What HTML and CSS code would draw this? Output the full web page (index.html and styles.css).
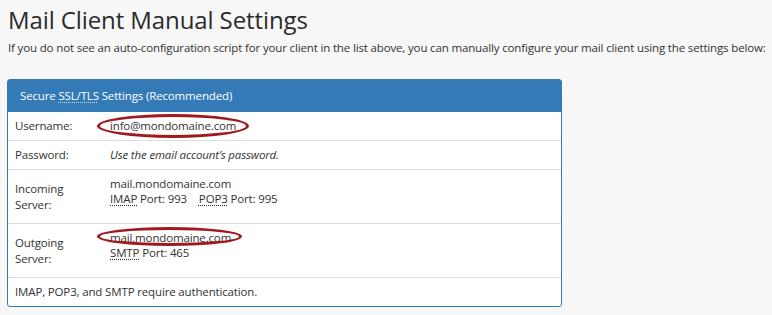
FILE: index.html
```html
<!DOCTYPE html>
<html lang="fr">
<head>
  <meta charset="UTF-8">
  <meta name="viewport" content="width=device-width, initial-scale=1.0">
  <title>Mail Client Manual Settings</title>
  <link rel="stylesheet" href="styles.css">
</head>
<body>
  <div class="page">
    <h1>Mail Client Manual Settings</h1>
    <p class="description">If you do not see an auto-configuration script for your client in the list above, you can manually configure your mail client using the settings below:</p>

    <div class="panel">
      <div class="panel-heading">Secure <abbr title="Secure Sockets Layer/Transport Layer Security">SSL/TLS</abbr> Settings (Recommended)</div>

      <div class="row">
        <div class="label">Username:</div>
        <div class="value"><span class="circled circled-user">info@mondomaine.com</span></div>
      </div>

      <div class="row">
        <div class="label">Password:</div>
        <div class="value"><em>Use the email account’s password.</em></div>
      </div>

      <div class="row row-server">
        <div class="label">Incoming<br>Server:</div>
        <div class="value">
          mail.mondomaine.com<br>
          <abbr title="Internet Message Access Protocol">IMAP</abbr> Port: 993
          <span class="port"><abbr title="Post Office Protocol 3">POP3</abbr> Port: 995</span>
        </div>
      </div>

      <div class="row row-server">
        <div class="label">Outgoing<br>Server:</div>
        <div class="value">
          <span class="circled circled-out">mail.mondomaine.com</span><br>
          <abbr title="Simple Mail Transfer Protocol">SMTP</abbr> Port: 465
        </div>
      </div>

      <div class="row row-note">
        IMAP, POP3, and SMTP require authentication.
      </div>
    </div>
  </div>
</body>
</html>
```

FILE: styles.css
```css
body {
  margin: 0;
  background-color: #f7f7f7;
  color: #333;
  font-family: 'Open Sans', 'Liberation Sans', sans-serif;
  font-size: 11.5px;
  letter-spacing: -0.15px;
  line-height: 16px;
}

.page {
  padding: 6px 7px 0;
}

h1 {
  margin: 0 0 0 1px;
  font-size: 24px;
  line-height: 28px;
  font-weight: 400;
  letter-spacing: -0.1px;
  color: #2b2b2b;
}

p.description {
  margin: 6px 0 0 1px;
  color: #333;
  white-space: nowrap;
}

.panel {
  margin-top: 23px;
  width: 553px;
  border: 1px solid #337ab7;
  border-radius: 3px;
  background-color: #fff;
}

.panel-heading {
  padding: 8px 12px;
  background-color: #337ab7;
  color: #fff;
}

abbr[title] {
  text-decoration: underline dotted;
  text-underline-offset: 2px;
}

.panel-heading abbr[title] {
  text-decoration-color: #c8d6e6;
}

.row {
  display: grid;
  grid-template-columns: 95px 1fr;
  border-top: 1px solid #ddd;
}

.panel-heading + .row {
  border-top: none;
}

.label,
.value {
  padding: 6px 7px;
}

.label {
  align-self: center;
}

.row-server .value {
  line-height: 15px;
  padding-bottom: 17px;
}

.port {
  margin-left: 9px;
}

.row-note {
  display: block;
  padding: 6px 7px;
}

.circled {
  position: relative;
}

.circled::after {
  content: "";
  position: absolute;
  border: 3px solid #a0191e;
  border-radius: 50%;
  box-sizing: border-box;
}

.circled-user::after {
  left: -13px;
  top: -4px;
  width: 152px;
  height: 24px;
}

.circled-out::after {
  left: -13px;
  top: -3px;
  width: 145px;
  height: 19px;
}
```
